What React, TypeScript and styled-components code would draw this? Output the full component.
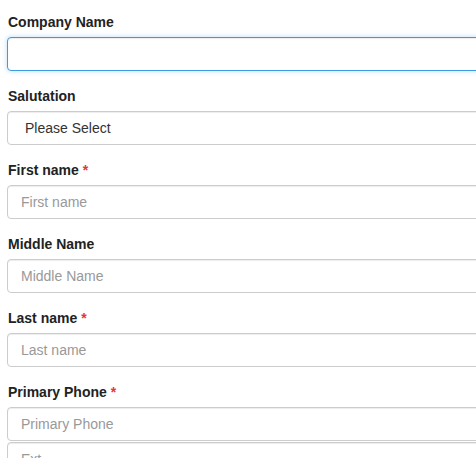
import React from "react";
import styled, { createGlobalStyle, css } from "styled-components";

const GlobalStyle = createGlobalStyle`
  html, body {
    margin: 0;
    padding: 0;
    background: #ffffff;
    overflow: hidden;
  }
  body {
    font-family: "Liberation Sans", Arial, sans-serif;
  }
  * { box-sizing: border-box; }
`;

const Form = styled.form`
  display: flex;
  flex-direction: column;
  padding: 12px 0 0 7px;
  width: 540px;
`;

const Group = styled.div`
  display: flex;
  flex-direction: column;
  margin-bottom: 15px;
`;

const Label = styled.label`
  display: block;
  padding-left: 1px;
  margin-bottom: 5px;
  font-size: 14px;
  line-height: 20px;
  font-weight: 700;
  color: #222222;
`;

const Required = styled.span`
  color: #e8343a;
  margin-left: 4px;
  font-weight: 700;
`;

const fieldBase = css`
  display: block;
  width: 100%;
  height: 34px;
  margin: 0;
  font-family: "Liberation Sans", Arial, sans-serif;
  font-size: 14px;
  line-height: 20px;
  color: #333333;
  background: #ffffff;
  border: 1px solid #cccccc;
  border-radius: 4px;
  box-shadow: inset 0 1px 1px rgba(0, 0, 0, 0.075);
  outline: none;
  &::placeholder {
    color: #999999;
    opacity: 1;
  }
`;

const Input = styled.input<{ $focused?: boolean; $stacked?: boolean }>`
  ${fieldBase};
  padding: 6px 13px;
  ${(p) =>
    p.$focused &&
    css`
      border-color: #3f9ae2;
      box-shadow: inset 0 1px 1px rgba(0, 0, 0, 0.075),
        0 0 5px rgba(102, 175, 233, 0.45);
    `}
  ${(p) =>
    p.$stacked &&
    css`
      margin-top: 1px;
    `}
`;

const Select = styled.select`
  ${fieldBase};
  appearance: none;
  -webkit-appearance: none;
  padding: 6px 17px;
`;

type Field = {
  label: string;
  placeholder?: string;
  required?: boolean;
};

const fields: Field[] = [
  { label: "First name", placeholder: "First name", required: true },
  { label: "Middle Name", placeholder: "Middle Name" },
  { label: "Last name", placeholder: "Last name", required: true },
];

export default function App() {
  return (
    <>
      <GlobalStyle />
      <Form onSubmit={(e) => e.preventDefault()}>
        <Group>
          <Label htmlFor="company">Company Name</Label>
          <Input id="company" type="text" $focused />
        </Group>
        <Group>
          <Label htmlFor="salutation">Salutation</Label>
          <Select id="salutation" defaultValue="">
            <option value="">Please Select</option>
            <option value="mr">Mr.</option>
            <option value="ms">Ms.</option>
            <option value="mrs">Mrs.</option>
            <option value="dr">Dr.</option>
          </Select>
        </Group>
        {fields.map((f) => (
          <Group key={f.label}>
            <Label>
              {f.label}
              {f.required && <Required>*</Required>}
            </Label>
            <Input type="text" placeholder={f.placeholder} />
          </Group>
        ))}
        <Group>
          <Label>
            Primary Phone<Required>*</Required>
          </Label>
          <Input type="text" placeholder="Primary Phone" />
          <Input type="text" placeholder="Ext" $stacked />
        </Group>
      </Form>
    </>
  );
}
